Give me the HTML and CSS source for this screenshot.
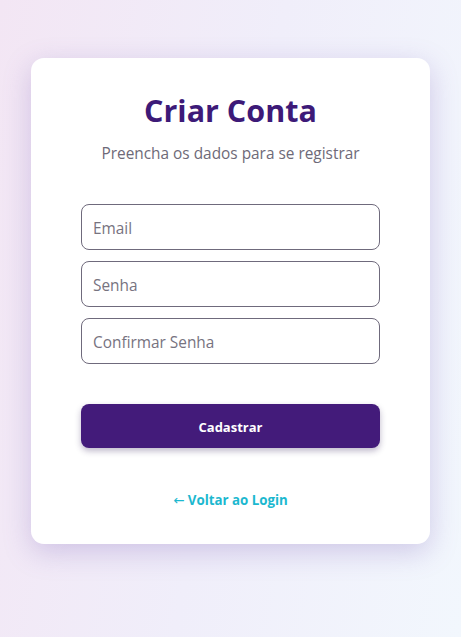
FILE: index.html
```html
<!DOCTYPE html>
<html lang="pt">
<head>
<meta charset="utf-8">
<title>Criar Conta</title>
<link rel="stylesheet" href="styles.css">
</head>
<body>
<main class="page">
  <section class="card">
    <h1 class="title">Criar Conta</h1>
    <p class="subtitle">Preencha os dados para se registrar</p>
    <form class="form">
      <div class="fields">
        <input class="field" type="email" placeholder="Email">
        <input class="field" type="password" placeholder="Senha">
        <input class="field" type="password" placeholder="Confirmar Senha">
      </div>
      <button class="submit" type="button">Cadastrar</button>
    </form>
    <a class="back" href="#"><span class="arrow">←</span> Voltar ao Login</a>
  </section>
</main>
</body>
</html>
```

FILE: styles.css
```css
* { box-sizing: border-box; }
html, body { margin: 0; height: 100%; }
body {
  font-family: "Open Sans", "Noto Sans", sans-serif;
  background: linear-gradient(100deg, #f3e6f4 0%, #f0eefa 50%, #f2f7fd 100%);
}
.page {
  min-height: 100%;
  display: flex;
  justify-content: center;
  align-items: flex-start;
  padding-top: 58px;
}
.card {
  width: 399px;
  background: #fff;
  border-radius: 13px;
  padding: 34px 50px 33px;
  box-shadow: 0 8px 28px rgba(120, 90, 180, 0.28);
  display: flex;
  flex-direction: column;
  align-items: stretch;
}
.title {
  margin: 0;
  text-align: center;
  font-size: 30.5px;
  line-height: 36px;
  font-weight: 700;
  color: #3d1a78;
}
.subtitle {
  margin: 14px 0 0;
  text-align: center;
  font-size: 15.4px;
  line-height: 24px;
  color: #6e6a78;
}
.form {
  margin-top: 38px;
  display: flex;
  flex-direction: column;
}
.fields {
  display: flex;
  flex-direction: column;
  gap: 11px;
}
.field {
  height: 46px;
  width: 100%;
  border: 1px solid #6f6a7c;
  border-radius: 8px;
  padding: 2px 11px 0;
  font-family: inherit;
  font-size: 15.4px;
  color: #333;
  background: #fff;
  outline: none;
}
.field::placeholder { color: #77737f; }
.submit {
  margin-top: 40px;
  height: 44px;
  padding-top: 3px;
  border: none;
  border-radius: 8px;
  background: #431b7a;
  color: #fff;
  font-family: inherit;
  font-size: 13px;
  font-weight: 700;
  box-shadow: 0 3px 6px rgba(40, 20, 80, 0.3);
  cursor: pointer;
}
.back {
  margin-top: 42px;
  align-self: center;
  font-size: 13.3px;
  line-height: 20px;
  font-weight: 700;
  color: #1cb8cf;
  text-decoration: none;
}
.arrow {
  font-family: "DejaVu Sans", sans-serif;
  font-weight: 400;
}
```
